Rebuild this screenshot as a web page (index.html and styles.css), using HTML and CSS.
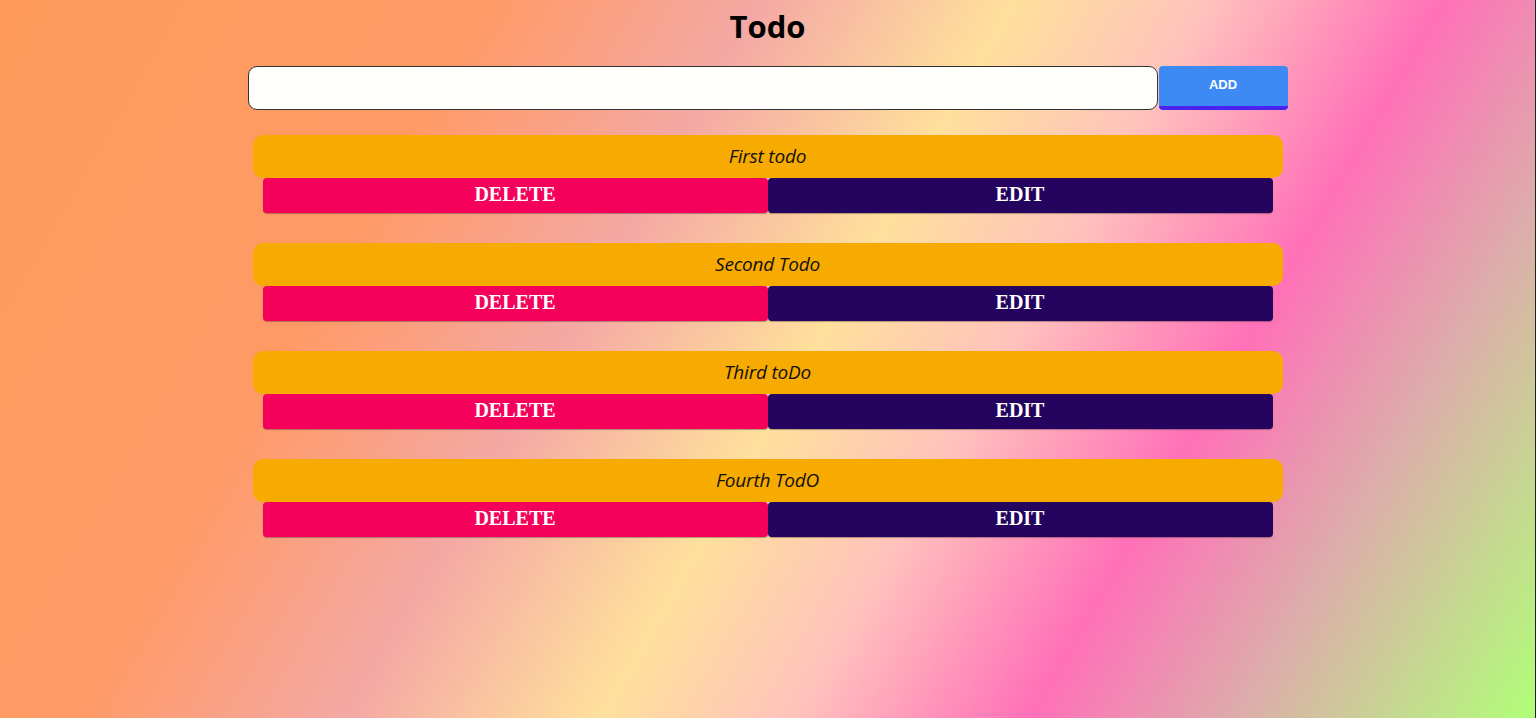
FILE: index.html
```html
<!DOCTYPE html>
<html lang="en">
<head>
<meta charset="utf-8">
<title>Todo</title>
<link rel="stylesheet" href="styles.css">
</head>
<body>
<main class="app">
  <h1 class="title">Todo</h1>
  <form class="add-form">
    <input class="add-input" type="text">
    <button class="add-btn" type="button">ADD</button>
  </form>
  <ul class="todo-list">
    <li class="todo">
      <div class="todo-text">First todo</div>
      <div class="todo-actions">
        <button class="btn btn-delete" type="button">DELETE</button>
        <button class="btn btn-edit" type="button">EDIT</button>
      </div>
    </li>
    <li class="todo">
      <div class="todo-text">Second Todo</div>
      <div class="todo-actions">
        <button class="btn btn-delete" type="button">DELETE</button>
        <button class="btn btn-edit" type="button">EDIT</button>
      </div>
    </li>
    <li class="todo">
      <div class="todo-text">Third toDo</div>
      <div class="todo-actions">
        <button class="btn btn-delete" type="button">DELETE</button>
        <button class="btn btn-edit" type="button">EDIT</button>
      </div>
    </li>
    <li class="todo">
      <div class="todo-text">Fourth TodO</div>
      <div class="todo-actions">
        <button class="btn btn-delete" type="button">DELETE</button>
        <button class="btn btn-edit" type="button">EDIT</button>
      </div>
    </li>
  </ul>
</main>
</body>
</html>
```
FILE: styles.css
```css
html {
  min-height: 100%;
  background: linear-gradient(120deg,
    #ff9a5c 0%,
    #ff9a66 25%,
    #f4a8a4 39%,
    #ffe09c 52%,
    #ffc2bc 62%,
    #ff70b8 74%,
    #dcaeaa 85%,
    #b0ff78 100%);
}

body {
  margin: 0;
  min-height: 718px;
  font-family: "Liberation Sans", Arial, sans-serif;
  border-right: 1px solid #222;
  box-sizing: border-box;
}

.app {
  width: 1040px;
  margin: 0 auto;
  display: flex;
  flex-direction: column;
  align-items: stretch;
}

.title {
  margin: 8px 0 0;
  height: 38px;
  line-height: 36px;
  text-align: center;
  font-family: "Open Sans", "Liberation Sans", sans-serif;
  font-weight: 700;
  font-size: 31px;
  color: #000;
}

.add-form {
  display: flex;
  margin-top: 20px;
  height: 44px;
}

.add-input {
  flex: 1;
  height: 44px;
  box-sizing: border-box;
  border: 1px solid #333;
  border-radius: 9px;
  background: #fffffc;
  margin: 0;
  padding: 0 10px;
}

.add-btn {
  width: 129px;
  margin-left: 1px;
  height: 44px;
  box-sizing: border-box;
  border: none;
  border-bottom: 4px solid #4a22f0;
  border-radius: 4px;
  background: #3e8af5;
  color: #fff;
  font-family: "Liberation Sans", Arial, sans-serif;
  font-weight: 700;
  font-size: 13px;
  padding: 0 0 3px;
}

.todo-list {
  list-style: none;
  margin: 25px 0 0;
  padding: 0 5px;
  display: flex;
  flex-direction: column;
  gap: 30px;
}

.todo {
  display: flex;
  flex-direction: column;
}

.todo-text {
  height: 43px;
  line-height: 43px;
  background: #f7aa00;
  border-radius: 10px;
  text-align: center;
  font-family: "Open Sans", "Noto Sans", sans-serif;
  font-style: italic;
  font-size: 19px;
  color: #111;
  letter-spacing: -0.2px;
}

.todo-actions {
  display: flex;
  padding: 0 10px;
  height: 35px;
}

.btn {
  flex: 1;
  margin: 0;
  border: none;
  border-radius: 4px;
  color: #fff;
  font-family: "Liberation Serif", "Times New Roman", serif;
  font-weight: 700;
  font-size: 20px;
  padding: 0 0 2px;
  box-shadow: 0 1px 1px rgba(0,0,0,0.3);
}

.btn-delete {
  background: #f5005a;
}

.btn-edit {
  background: #25045f;
}
```
